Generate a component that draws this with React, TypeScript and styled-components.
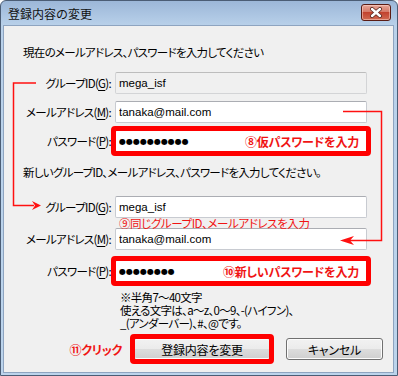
import styled, { createGlobalStyle } from "styled-components";

const GlobalStyle = createGlobalStyle`
  html, body {
    margin: 0;
    padding: 0;
    background: #ffffff;
  }
  body {
    font-family: "Noto Sans CJK JP", "Noto Sans", sans-serif;
    font-size: 12px;
    color: #000;
  }
`;

const RED = "#f01414";

const Window = styled.div`
  position: relative;
  width: 398px;
  height: 376px;
  box-sizing: border-box;
  display: flex;
  flex-direction: column;
  border: 1px solid #4b5d75;
  border-radius: 6px 6px 0 0;
  background: linear-gradient(#9cb7d8, #b9d1ea 25px, #bcd4ec);
  padding: 0 3px 2px 2px;
  overflow: hidden;
`;

const TitleBar = styled.div`
  height: 24px;
  display: flex;
  align-items: center;
  justify-content: space-between;
  padding: 0 3px 0 5px;
  flex-shrink: 0;
`;

const Title = styled.span`
  font-size: 12px;
  color: #111;
`;

const CloseButton = styled.div`
  width: 28px;
  height: 15px;
  margin-top: -2px;
  border: 1px solid #5a1c14;
  border-radius: 3px;
  background: linear-gradient(#e7a698, #d57a68 45%, #c2432e 50%, #d06a52);
  box-shadow: inset 0 0 0 1px rgba(255, 220, 210, 0.5);
  display: flex;
  align-items: center;
  justify-content: center;
`;

const Client = styled.div`
  flex: 1;
  background: #f0f0f0;
  border: 1px solid #8ea4c0;
  padding: 18px 10px 0 19px;
  display: flex;
  flex-direction: column;
  font-size: 11.5px;
  letter-spacing: -0.7px;
  font-feature-settings: "palt" 1;
`;

const Lead = styled.p<{ $top: number }>`
  margin: ${(p) => p.$top}px 0 0;
  line-height: 16px;
  white-space: nowrap;
`;

const FormGrid = styled.div<{ $top: number; $gap: number }>`
  margin-top: ${(p) => p.$top}px;
  display: grid;
  grid-template-columns: 88px 252px;
  column-gap: 4px;
  row-gap: ${(p) => p.$gap}px;
  align-items: center;
`;

const Label = styled.label`
  text-align: right;
  white-space: nowrap;
  line-height: 22px;
`;

const Key = styled.span`
  text-decoration: underline;
  text-underline-offset: 2px;
`;

const FieldWrap = styled.div`
  position: relative;
  height: 22px;
`;

const Field = styled.input<{ $disabled?: boolean; $masked?: boolean }>`
  box-sizing: border-box;
  width: 252px;
  height: 22px;
  margin: 0;
  padding: 0 0 0 3px;
  border: 1px solid ${(p) => (p.$disabled ? "#d3d4d6" : "#c8cbd1")};
  border-top-color: ${(p) => (p.$disabled ? "#bdbdbd" : "#abadb3")};
  border-radius: 2px;
  background: ${(p) => (p.$disabled ? "#f0f0f0" : "#ffffff")};
  font-family: ${(p) =>
    p.$masked ? '"DejaVu Sans", sans-serif' : '"Liberation Sans", Arial, sans-serif'};
  font-size: ${(p) => (p.$masked ? "8px" : "11.5px")};
  letter-spacing: 0;
  color: #000;
  outline: none;
`;

const Highlight = styled.div<{ $inset: string }>`
  position: absolute;
  inset: ${(p) => p.$inset};
  border: 5px solid #ff0000;
  border-radius: 4px;
  pointer-events: none;
`;

const InlineNote = styled.span`
  position: absolute;
  right: 8px;
  top: 0;
  bottom: 0;
  display: flex;
  align-items: center;
  color: ${RED};
  font-weight: 700;
  font-size: 12px;
  letter-spacing: -0.2px;
  pointer-events: none;
`;

const BelowNote = styled.span`
  position: absolute;
  left: 4px;
  top: calc(100% - 1px);
  line-height: 12px;
  color: ${RED};
  font-size: 11.5px;
  letter-spacing: -0.4px;
  white-space: nowrap;
  z-index: 2;
`;

const Notes = styled.div`
  grid-column: 2;
  margin-top: -1px;
  padding-left: 5px;
  line-height: 13px;
  white-space: nowrap;
`;

const ButtonRow = styled.div`
  margin-top: 8px;
  display: flex;
  justify-content: flex-end;
  align-items: center;
`;

const ClickNote = styled.span`
  color: ${RED};
  font-weight: 700;
  font-size: 12px;
  letter-spacing: -0.3px;
  margin-right: 11px;
`;

const ButtonWrap = styled.div`
  position: relative;
  margin-right: 15px;
`;

const Button = styled.button<{ $width: number }>`
  width: ${(p) => p.$width}px;
  height: 22px;
  margin: 0;
  padding: 0;
  border: 1px solid #707070;
  border-radius: 3px;
  background: linear-gradient(#f2f2f2, #ebebeb 50%, #dddddd 50%, #cfcfcf);
  box-shadow: inset 0 0 0 1px #fcfcfc;
  font-family: "Noto Sans CJK JP", sans-serif;
  font-size: 12px;
  letter-spacing: -0.2px;
  color: #000;
  font-feature-settings: "palt" 1;
`;

const Arrows = styled.svg`
  position: absolute;
  left: -1px;
  top: -1px;
  pointer-events: none;
  z-index: 3;
`;

const CloseIcon = () => (
  <svg width="14" height="11" viewBox="0 0 14 11">
    <path d="M3 2 L11 9 M11 2 L3 9" stroke="#5b2a22" strokeWidth="4" strokeLinecap="round" />
    <path d="M3 2 L11 9 M11 2 L3 9" stroke="#ffffff" strokeWidth="2.4" strokeLinecap="round" />
  </svg>
);

export default function App() {
  return (
    <>
      <GlobalStyle />
      <Window>
        <TitleBar>
          <Title>登録内容の変更</Title>
          <CloseButton>
            <CloseIcon />
          </CloseButton>
        </TitleBar>
        <Client>
          <Lead $top={0}>現在のメールアドレス、パスワードを入力してください</Lead>

          <FormGrid $top={12} $gap={7}>
            <Label>
              グループID(<Key>G</Key>):
            </Label>
            <FieldWrap>
              <Field $disabled readOnly value="mega_isf" />
            </FieldWrap>
            <Label>
              メールアドレス(<Key>M</Key>):
            </Label>
            <FieldWrap>
              <Field readOnly value="tanaka@mail.com" />
            </FieldWrap>
            <Label>
              パスワード(<Key>P</Key>):
            </Label>
            <FieldWrap>
              <Field $masked readOnly value="●●●●●●●●●●" />
              <Highlight $inset="-4px" />
              <InlineNote>⑧仮パスワードを入力</InlineNote>
            </FieldWrap>
          </FormGrid>

          <Lead $top={12}>新しいグループID、メールアドレス、パスワードを入力してください。</Lead>

          <FormGrid $top={16} $gap={10}>
            <Label>
              グループID(<Key>G</Key>):
            </Label>
            <FieldWrap>
              <Field readOnly value="mega_isf" />
              <BelowNote>⑨同じグループID、メールアドレスを入力</BelowNote>
            </FieldWrap>
            <Label>
              メールアドレス(<Key>M</Key>):
            </Label>
            <FieldWrap>
              <Field readOnly value="tanaka@mail.com" />
            </FieldWrap>
            <Label>
              パスワード(<Key>P</Key>):
            </Label>
            <FieldWrap>
              <Field $masked readOnly value="●●●●●●●●" />
              <Highlight $inset="-4px" />
              <InlineNote>⑩新しいパスワードを入力</InlineNote>
            </FieldWrap>
            <Notes>
              ※半角7～40文字
              <br />
              使える文字は、a～z、0～9、-(ハイフン)、
              <br />
              _(アンダーバー)、#、@です。
            </Notes>
          </FormGrid>

          <ButtonRow>
            <ClickNote>⑪クリック</ClickNote>
            <ButtonWrap>
              <Button $width={138}>登録内容を変更</Button>
              <Highlight $inset="-4px -3px" />
            </ButtonWrap>
            <Button $width={97}>キャンセル</Button>
          </ButtonRow>
        </Client>

        <Arrows width="398" height="376" viewBox="0 0 398 376">
          <polyline points="36,83 13.5,83 13.5,205.5 34,205.5" fill="none" stroke="#ff1010" strokeWidth="1.5" />
          <path d="M41,205.5 L32,201 L35,205.5 L32,210 Z" fill="#ff1010" />
          <polyline points="343,111.5 381.5,111.5 381.5,240.5 350,240.5" fill="none" stroke="#ff1010" strokeWidth="1.5" />
          <path d="M340,240.5 L354,236 L350,240.5 L354,245 Z" fill="#ff1010" />
        </Arrows>
      </Window>
    </>
  );
}
